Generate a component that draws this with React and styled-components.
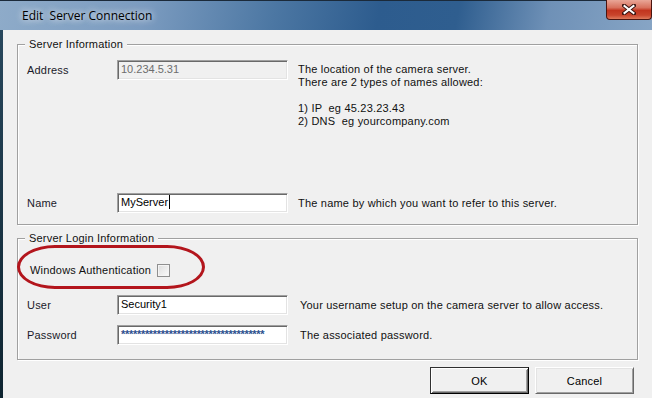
import React from 'react'
import styled, { createGlobalStyle } from 'styled-components'

const Global = createGlobalStyle`
  body {
    margin: 0;
    background: #1d3344;
  }
  * { box-sizing: border-box; }
`

const Window = styled.div`
  width: 652px;
  height: 398px;
  display: flex;
  flex-direction: column;
  overflow: hidden;
  background: linear-gradient(to bottom, #2a4a60, #0e2430);
  font-family: "Liberation Sans", Arial, sans-serif;
  font-size: 11px;
  letter-spacing: 0.2px;
  color: #111;
`

const TitleBar = styled.div`
  height: 30px;
  flex-shrink: 0;
  display: flex;
  justify-content: space-between;
  align-items: flex-start;
  border-top: 1px solid #1b2a3a;
  background: linear-gradient(100deg, #8eabc9 0%, #7c9cc0 22%, #4c77a3 42%, #2d5c8e 58%, #2f5e8f 70%, #6f91b7 84%, #87a5c5 100%);
`

const TitleText = styled.div`
  padding-left: 22px;
  line-height: 29px;
  font-family: "Open Sans", "DejaVu Sans", sans-serif;
  font-size: 12px;
  letter-spacing: 0;
  color: #000;
  text-shadow: 0 0 6px rgba(255, 255, 255, 0.9), 0 0 10px rgba(255, 255, 255, 0.6);
  white-space: pre;
`

const CloseButton = styled.div`
  width: 46px;
  height: 20px;
  margin-top: -1px;
  display: flex;
  align-items: center;
  justify-content: center;
  border: 1px solid #4a1510;
  border-top: none;
  border-radius: 0 0 4px 4px;
  background: linear-gradient(to bottom, #e9a697 0%, #d8715d 40%, #c2351f 55%, #c9452c 80%, #de7a5c 100%);
`

const Client = styled.div`
  flex: 1;
  margin-left: 3px;
  background: #f0f0f0;
  padding: 8px 14px 0 14px;
  display: flex;
  flex-direction: column;
`

const GroupBox = styled.fieldset`
  margin: ${(p) => (p.$gap ? '7px' : '0')} 0 0 0;
  padding: 0 9px ${(p) => p.$bottom || 0}px 9px;
  border: 1px solid #a0a0a0;
  box-shadow: inset 1px 1px 0 #fff, 1px 1px 0 #fff;
  min-width: 0;
`

const Legend = styled.legend`
  margin-left: -2px;
  padding: 0 4px;
  line-height: 13px;
  font-size: 11px;
  background: #f0f0f0;
  color: #111;
`

const Row = styled.div`
  display: grid;
  grid-template-columns: 80px 171px 1fr;
  column-gap: 10px;
  align-items: start;
  margin-top: ${(p) => p.$top || 0}px;
`

const Label = styled.div`
  line-height: 20px;
  color: #1a1a2a;
`

const Field = styled.div`
  height: 20px;
  padding-left: 3px;
  line-height: 17px;
  font-size: 11px;
  letter-spacing: 0;
  white-space: nowrap;
  overflow: hidden;
  background: ${(p) => (p.$disabled ? '#f0f0f0' : '#fff')};
  color: ${(p) => (p.$disabled ? '#6d6d6d' : '#000')};
  border-top: 1px solid #a0a0a0;
  border-left: 1px solid #a0a0a0;
  border-right: 1px solid #fff;
  border-bottom: 1px solid #fff;
  box-shadow: inset 1px 1px 0 #696969, inset -1px -1px 0 #e3e3e3;
`

const Stars = styled.span`
  color: #2d4f8e;
  font-size: 11px;
  font-weight: bold;
  letter-spacing: -0.3px;
`

const Caret = styled.span`
  display: inline-block;
  width: 1px;
  height: 14px;
  background: #000;
  vertical-align: -3px;
  margin-left: 1px;
`

const Desc = styled.div`
  padding-top: ${(p) => (p.$multi ? 3 : 0)}px;
  padding-left: ${(p) => p.$indent || 0}px;
  line-height: ${(p) => (p.$multi ? '13px' : '20px')};
  white-space: pre;
  color: #111;
`

const AuthRow = styled.div`
  position: relative;
  margin-top: 14px;
  height: 22px;
  padding-left: 3px;
  display: flex;
  align-items: center;
  gap: 6px;
`

const Ellipse = styled.div`
  position: absolute;
  left: -10px;
  top: -14px;
  width: 188px;
  height: 44px;
  border: 3px solid #b3151c;
  border-radius: 38px / 22px;
  pointer-events: none;
`

const CheckBox = styled.div`
  width: 13px;
  height: 13px;
  border: 1px solid #8f8f8f;
  background: linear-gradient(135deg, #dcdcdc, #fbfbfb);
  box-shadow: inset 0 0 0 1px #f4f4f4;
`

const ButtonBar = styled.div`
  margin-top: 7px;
  padding-right: 4px;
  display: flex;
  justify-content: flex-end;
  gap: 6px;
`

const Button = styled.div`
  width: 99px;
  height: 27px;
  display: flex;
  align-items: center;
  justify-content: center;
  font-size: 11px;
  color: #000;
  background: #f0f0f0;
  border-top: 1px solid ${(p) => (p.$default ? '#303030' : '#fff')};
  border-left: 1px solid ${(p) => (p.$default ? '#303030' : '#fff')};
  border-right: 1px solid ${(p) => (p.$default ? '#000' : '#696969')};
  border-bottom: 1px solid ${(p) => (p.$default ? '#000' : '#696969')};
  box-shadow: ${(p) =>
    p.$default
      ? 'inset 1px 1px 0 #fff, inset -1px -1px 0 #696969, inset 2px 2px 0 #f0f0f0, inset -2px -2px 0 #a0a0a0'
      : 'inset 1px 1px 0 #e3e3e3, inset -1px -1px 0 #a0a0a0'};
`

const CloseIcon = () => (
  <svg width="14" height="11" viewBox="0 0 14 11">
    <path d="M2 1.5 L12 9.5 M12 1.5 L2 9.5" stroke="#3a1410" strokeWidth="4" strokeLinecap="square" />
    <path d="M2.5 2 L11.5 9 M11.5 2 L2.5 9" stroke="#fff" strokeWidth="2" strokeLinecap="square" />
  </svg>
)

const App = () => {
  return (
    <>
      <Global />
      <Window>
        <TitleBar>
          <TitleText>Edit  Server Connection</TitleText>
          <CloseButton>
            <CloseIcon />
          </CloseButton>
        </TitleBar>
        <Client>
          <GroupBox $bottom={11}>
            <Legend>Server Information</Legend>
            <Row $top={9}>
              <Label>Address</Label>
              <Field $disabled>10.234.5.31</Field>
              <Desc $multi>
                {'The location of the camera server.\nThere are 2 types of names allowed:\n\n1) IP  eg 45.23.23.43\n2) DNS  eg yourcompany.com'}
              </Desc>
            </Row>
            <Row $top={65}>
              <Label>Name</Label>
              <Field>
                MyServer
                <Caret />
              </Field>
              <Desc>The name by which you want to refer to this server.</Desc>
            </Row>
          </GroupBox>
          <GroupBox $gap $bottom={14}>
            <Legend>Server Login Information</Legend>
            <AuthRow>
              <Ellipse />
              <span>Windows Authentication</span>
              <CheckBox />
            </AuthRow>
            <Row $top={14}>
              <Label>User</Label>
              <Field>Security1</Field>
              <Desc $indent={2}>Your username setup on the camera server to allow access.</Desc>
            </Row>
            <Row $top={10}>
              <Label>Password</Label>
              <Field>
                <Stars>************************************</Stars>
              </Field>
              <Desc $indent={2}>The associated password.</Desc>
            </Row>
          </GroupBox>
          <ButtonBar>
            <Button $default>OK</Button>
            <Button>Cancel</Button>
          </ButtonBar>
        </Client>
      </Window>
    </>
  )
}

export default App
